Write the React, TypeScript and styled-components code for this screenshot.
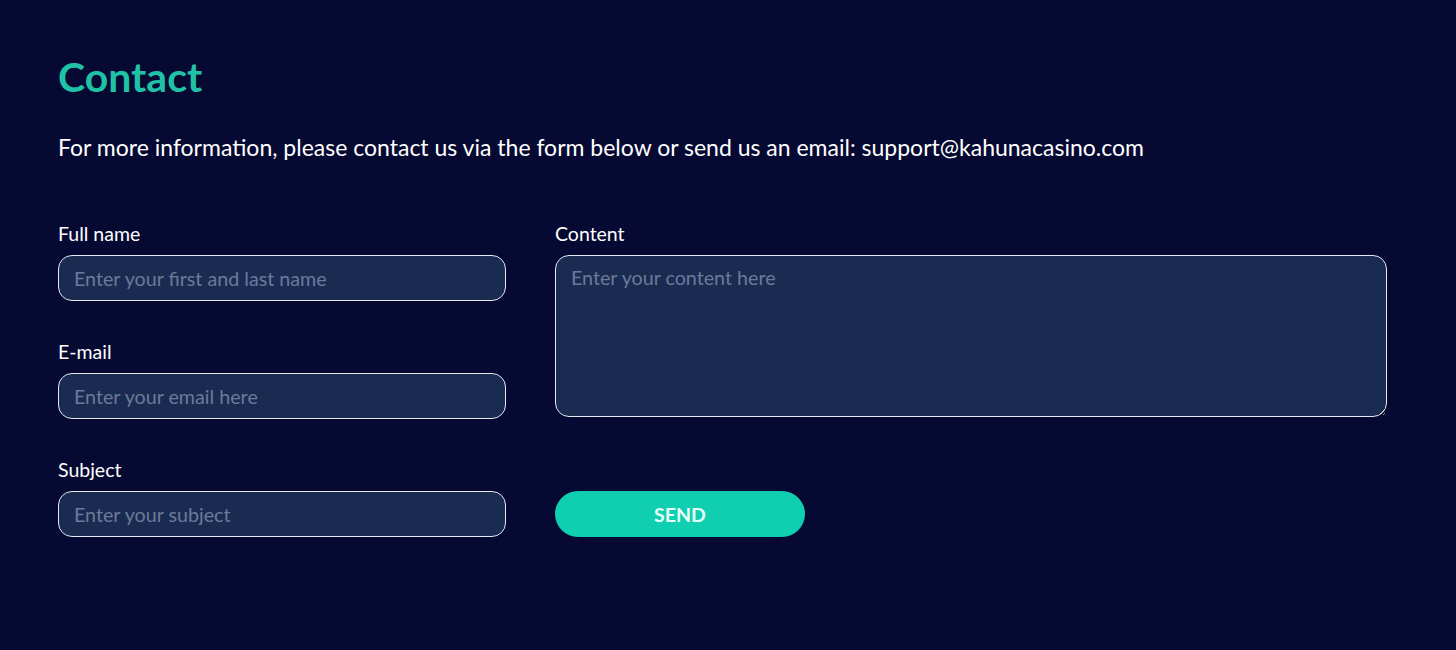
import styled, { createGlobalStyle } from 'styled-components';

const GlobalStyle = createGlobalStyle`
    html, body {
        margin: 0;
        padding: 0;
        background-color: #060932;
    }
    body {
        font-family: Lato, "Open Sans", sans-serif;
        color: #fff;
    }
`;

const App = () => {
    return (
        <>
            <GlobalStyle />
            <Page>
                <Title>Contact</Title>
                <Intro>
                    For more information, please contact us via the form below or send us an email: support@kahunacasino.com
                </Intro>

                <Form onSubmit={(e) => e.preventDefault()}>
                    <Column>
                        <Field>
                            <Label>Full name</Label>
                            <Input placeholder='Enter your first and last name' />
                        </Field>
                        <Field>
                            <Label>E-mail</Label>
                            <Input placeholder='Enter your email here' />
                        </Field>
                        <Field>
                            <Label>Subject</Label>
                            <Input placeholder='Enter your subject' />
                        </Field>
                    </Column>

                    <RightColumn>
                        <Field>
                            <Label>Content</Label>
                            <TextArea placeholder='Enter your content here' />
                        </Field>
                        <SendButton type='submit'>SEND</SendButton>
                    </RightColumn>
                </Form>
            </Page>
        </>
    )
}

const Page = styled.div`
    padding: 53px 58px 80px;
    min-height: 650px;
    box-sizing: border-box;
`;

const Title = styled.h1`
    margin: 0;
    font-size: 41px;
    line-height: 48px;
    font-weight: 700;
    color: #1fc2a7;
`;

const Intro = styled.p`
    margin: 31px 0 0;
    font-size: 23px;
    line-height: 30px;
    color: #fff;
`;

const Form = styled.form`
    margin-top: 61px;
    display: grid;
    grid-template-columns: 448px 832px;
    column-gap: 49px;
`;

const Column = styled.div`
    display: flex;
    flex-direction: column;
    gap: 40px;
`;

const RightColumn = styled.div`
    display: flex;
    flex-direction: column;
    justify-content: space-between;
    align-items: flex-start;
`;

const Field = styled.label`
    display: flex;
    flex-direction: column;
    width: 100%;
`;

const Label = styled.span`
    font-size: 19.5px;
    line-height: 22px;
    height: 22px;
    margin-bottom: 10px;
    color: #fff;
`;

const Input = styled.input`
    height: 46px;
    box-sizing: border-box;
    background-color: #1a2b52;
    border: 1px solid #e6e9f2;
    border-radius: 14px;
    padding: 0 15px;
    font-family: Lato, sans-serif;
    font-size: 19.7px;
    color: #fff;
    outline: none;

    &::placeholder {
        color: #6b7a99;
    }
`;

const TextArea = styled.textarea`
    height: 162px;
    box-sizing: border-box;
    background-color: #1a2b52;
    border: 1px solid #e6e9f2;
    border-radius: 14px;
    padding: 10px 15px;
    font-family: Lato, sans-serif;
    font-size: 19.7px;
    line-height: 24px;
    color: #fff;
    outline: none;

    &::placeholder {
        color: #6b7a99;
    }
`;

const SendButton = styled.button`
    width: 250px;
    height: 46px;
    border: none;
    border-radius: 23px;
    background-color: #10cfb0;
    color: #e6fffa;
    font-family: Lato, sans-serif;
    font-weight: 700;
    font-size: 19.5px;
    cursor: pointer;
`;

export default App
